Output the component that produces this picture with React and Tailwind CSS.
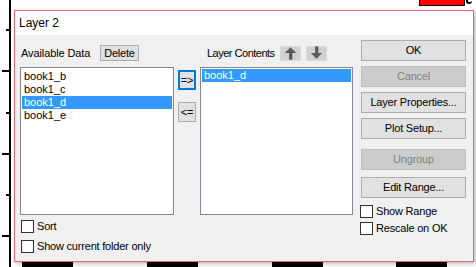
import React from 'react';

const FONT = { fontFamily: '"Liberation Sans", Arial, sans-serif' };

const available = ['book1_b', 'book1_c', 'book1_d', 'book1_e'];
const contents = ['book1_d'];

function Btn({ children, disabled = false, className = '' }) {
  const look = disabled
    ? 'bg-[#cccccc] border-[#bfbfbf] text-[#838383]'
    : 'bg-[#e1e1e1] border-[#adadad] text-black';
  return (
    <div className={`flex items-center justify-center border text-[11px] leading-none tracking-[-0.2px] ${look} ${className}`}>
      {children}
    </div>
  );
}

function Check({ label, className = '' }) {
  return (
    <div className={`flex items-center gap-[3px] h-[13px] text-[11px] leading-none tracking-[-0.2px] ${className}`}>
      <div className="w-[13px] h-[13px] border border-[#333333] bg-white shrink-0" />
      <span>{label}</span>
    </div>
  );
}

function ListBox({ items, selected, className = '' }) {
  return (
    <div className={`border border-[#828790] bg-white p-[1px] ${className}`}>
      {items.map(it => (
        <div
          key={it}
          className={`h-[13px] pl-[2px] flex items-center text-[11px] leading-none ${it === selected ? 'bg-[#3399ff] text-white' : 'text-black'}`}
        >
          {it}
        </div>
      ))}
    </div>
  );
}

function ArrowIcon({ down = false }) {
  return (
    <svg width="20" height="14" viewBox="0 0 20 14">
      {down ? (
        <g fill="#5b5b5b">
          <rect x="8.5" y="0" width="3.5" height="7" />
          <polygon points="4,7 16,7 10,13" />
        </g>
      ) : (
        <g fill="#5b5b5b">
          <polygon points="10,1 16,7 4,7" />
          <rect x="8.5" y="7" width="3.5" height="7" />
        </g>
      )}
    </svg>
  );
}

function Backdrop() {
  const ticks = [
    { y: 29, long: false },
    { y: 70, long: true },
    { y: 112, long: false },
    { y: 153, long: true },
    { y: 194, long: false },
    { y: 235, long: true },
  ];
  return (
    <>
      <div className="absolute left-[9px] top-0 w-[2px] h-[267px] bg-black" />
      {ticks.map(t => (
        <div
          key={t.y}
          className={`absolute h-[2px] bg-black ${t.long ? 'left-[2px] w-[8px]' : 'left-[6px] w-[4px]'}`}
          style={{ top: t.y }}
        />
      ))}
      {[22, 147, 272, 396].map(x => (
        <div key={x} className="absolute top-[262px] h-[5px] w-[51px] bg-black" style={{ left: x }} />
      ))}
      <div className="absolute left-[419px] top-[-2px] w-[46px] h-[8px] border border-black bg-[#ff0000]" />
      <div className="absolute left-[466px] top-[-4px] w-[6px] h-[8px] rounded-full border-l-2 border-b-2 border-black" />
    </>
  );
}

export default function App() {
  return (
    <div className="relative w-[476px] h-[267px] bg-white overflow-hidden" style={FONT}>
      <Backdrop />
      <div className="absolute left-[14px] top-[10px] w-[460px] h-[252px] border border-[#de6b6b] flex flex-col shadow-[2px_2px_4px_rgba(0,0,0,0.25)]">
        <div className="h-[24px] bg-white pl-[4px] flex items-center text-[12px] text-black">Layer 2</div>
        <div className="flex-1 bg-[#f0f0f0] flex items-start pl-[5px] pt-[5px]">
          {/* left part: lists */}
          <div className="w-[333px] mt-[5px] flex flex-col">
            <div className="h-[16px] flex items-center text-[11px] leading-none">
              <div className="w-[180px] flex items-center">
                <span className="pl-[1px] tracking-[-0.1px]">Available Data</span>
                <Btn className="ml-auto mr-[61px] w-[39px] h-[16px]">Delete</Btn>
              </div>
              <div className="flex items-center">
                <span className="pl-[7px] w-[80px] tracking-[-0.5px]">Layer Contents</span>
                <div className="w-[21px] h-[15px] bg-[#d1d1d1] border border-[#dadada] flex items-center justify-center">
                  <ArrowIcon />
                </div>
                <div className="ml-[5px] w-[21px] h-[15px] bg-[#d1d1d1] border border-[#dadada] flex items-center justify-center">
                  <ArrowIcon down />
                </div>
              </div>
            </div>
            <div className="mt-[6px] flex items-start">
              <ListBox items={available} selected="book1_d" className="w-[154px] h-[148px] pt-[2px]" />
              <div className="ml-[4px] mt-[3px] flex flex-col gap-[12px]">
                <Btn className="w-[18px] h-[20px] border-2 !border-[#0078d7]">=&gt;</Btn>
                <Btn className="w-[18px] h-[20px]">&lt;=</Btn>
              </div>
              <ListBox items={contents} selected="book1_d" className="ml-[4px] w-[153px] h-[148px]" />
            </div>
            <Check label="Sort" className="mt-[5px] ml-[1px]" />
            <Check label="Show current folder only" className="mt-[7px] ml-[1px]" />
          </div>
          {/* right part: buttons */}
          <div className="ml-[8px] w-[105px] flex flex-col">
            <Btn className="h-[21px]">OK</Btn>
            <Btn disabled className="h-[21px] mt-[5px]">Cancel</Btn>
            <Btn className="h-[21px] mt-[5px]">Layer Properties...</Btn>
            <Btn className="h-[21px] mt-[5px]">Plot Setup...</Btn>
            <Btn disabled className="h-[21px] mt-[10px]">Ungroup</Btn>
            <Btn className="h-[21px] mt-[7px]">Edit Range...</Btn>
            <Check label="Show Range" className="mt-[7px] -ml-[1px]" />
            <Check label="Rescale on OK" className="mt-[4px] -ml-[1px]" />
          </div>
        </div>
      </div>
    </div>
  );
}
